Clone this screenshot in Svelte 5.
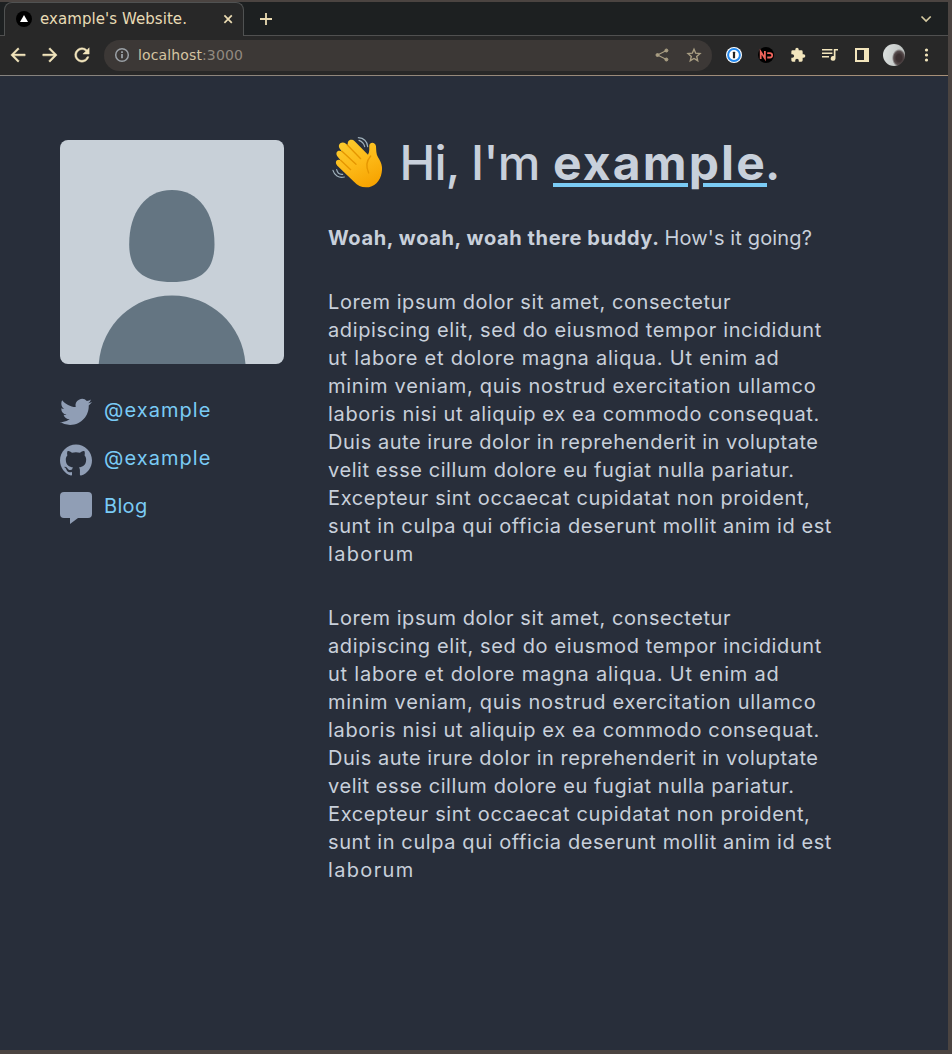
<script>
  const paragraph = [
    ['Lorem ipsum dolor sit amet, consectetur', 403],
    ['adipiscing elit, sed do eiusmod tempor incididunt', 494],
    ['ut labore et dolore magna aliqua. Ut enim ad', 451.5],
    ['minim veniam, quis nostrud exercitation ullamco', 488.5],
    ['laboris nisi ut aliquip ex ea commodo consequat.', 492],
    ['Duis aute irure dolor in reprehenderit in voluptate', 490.5],
    ['velit esse cillum dolore eu fugiat nulla pariatur.', 466.5],
    ['Excepteur sint occaecat cupidatat non proident,', 482.5],
    ['sunt in culpa qui officia deserunt mollit anim id est', 504],
    ['laborum', 86.5]
  ];
  const paragraphs = [paragraph, paragraph];

  // Spreads the letters of a run so that it fills the given measure.
  function fit(node, width) {
    const natural = node.getBoundingClientRect().width;
    node.style.letterSpacing = `${(width - natural) / node.textContent.length}px`;
  }
</script>

<div class="window">
  <div class="strip">
    <div class="tab">
      <svg class="favicon" width="16" height="16" viewBox="0 0 16 16"><circle cx="8" cy="8" r="8" fill="#000" /><path d="M8 3.9 12 11H4z" fill="#fff" /></svg>
      <span class="title"><span use:fit={147}>example's Website.</span></span>
      <svg class="close" width="16" height="16" viewBox="0 0 16 16" fill="none" stroke="#ebdbb2" stroke-width="1.7"><path d="m4.4 4.4 7.4 7.4m0-7.4-7.4 7.4" /></svg>
    </div>
    <svg class="plus" width="16" height="16" viewBox="0 0 16 16" stroke="#ebdbb2" stroke-width="1.8"><path d="M8 2v12M2 8h12" /></svg>
    <svg class="chevron" width="16" height="16" viewBox="0 0 16 16" fill="none" stroke="#d5c9a1" stroke-width="1.7"><path d="m3.5 5.500 4.600 4.500L12.700 5.500" /></svg>
  </div>

  <div class="toolbar">
    <div class="nav">
      <svg width="20" height="20" viewBox="0 0 24 24"><path d="M20 11H7.830l5.590-5.590L12 4l-8 8 8 8 1.410-1.410L7.830 13H20z" transform="matrix(1.080 0 0 1.080 -1 -1)" stroke="#f2e5bc" stroke-width=".5" /></svg>
      <svg width="20" height="20" viewBox="0 0 24 24"><path d="m12 4-1.410 1.410L16.170 11H4v2h12.170l-5.580 5.590L12 20l8-8z" transform="matrix(1.080 0 0 1.080 -1 -1)" stroke="#f2e5bc" stroke-width=".5" /></svg>
      <svg width="20" height="20" viewBox="0 0 24 24"><path d="M17.650 6.350A7.958 7.958 0 0 0 12 4a8 8 0 1 0 7.730 10h-2.080A5.990 5.990 0 0 1 12 18a6 6 0 1 1 0-12c1.660 0 3.140.69 4.220 1.780L13 11h7V4z" transform="matrix(1.080 0 0 1.080 -1 -1)" stroke="#f2e5bc" stroke-width=".5" /></svg>
    </div>
    <div class="address">
      <svg width="16" height="16" viewBox="0 0 16 16" fill="none" stroke="#9aa0a6"><circle cx="8" cy="8" r="6.300" stroke-width="1.500" /><path d="M8 7v4.300M8 4.300v1.600" stroke-width="1.800" /></svg>
      <span class="url"><span use:fit={105}>localhost<i>:3000</i></span></span>
      <svg class="share" width="16" height="16" viewBox="0 0 16 16" fill="#a99e83" stroke="#a99e83"><path d="M12.500 3.500 3.500 8l9 4.500" fill="none" stroke-width="1.200" /><circle cx="12.400" cy="3.500" r="1.500" /><circle cx="3.500" cy="8" r="1.500" /><circle cx="12.400" cy="12.500" r="1.500" /></svg>
      <svg class="star" width="16" height="16" viewBox="0 0 16 16" fill="none" stroke="#a99e83" stroke-width="1.400"><path d="m8 2.200 1.700 4 4.300.4-3.300 2.900 1 4.200L8 11.500l-3.700 2.200 1-4.200L2 6.600l4.300-.4z" /></svg>
    </div>
    <div class="extensions">
      <svg width="16" height="16" viewBox="0 0 16 16"><circle cx="8" cy="8" r="8" fill="#fff" /><circle cx="8" cy="8" r="5.900" fill="#fff" stroke="#2489ee" stroke-width="2" /><rect x="6.900" y="4.800" width="2.200" height="6.400" rx=".5" fill="#222" /></svg>
      <svg width="16" height="16" viewBox="0 0 16 16"><circle cx="8" cy="8" r="8" fill="#000" /><path d="M2.700 12V4.800l4.200 6.400V4M9.200 6.100H12a2.200 2.200 0 0 1 0 4.400H9.200" fill="none" stroke="#ee635b" stroke-width="1.800" /></svg>
      <svg width="16" height="16" viewBox="0 0 24 24"><path d="M20.500 11H19V7a2 2 0 0 0-2-2h-4V3.500a2.500 2.500 0 0 0-5 0V5H4a2 2 0 0 0-2 2v3.800h1.500a2.700 2.700 0 0 1 0 5.400H2V20a2 2 0 0 0 2 2h3.800v-1.500a2.700 2.700 0 0 1 5.400 0V22H17a2 2 0 0 0 2-2v-4h1.500a2.500 2.500 0 0 0 0-5z" /></svg>
      <svg width="16" height="16" viewBox="0 0 16 16"><path d="M0 2h10.400v1.500H0zm0 3.500h10.400V7H0zm0 3.500h7v1.500H0zM11.800 2H16v1.500h-2.500v7.900a2.400 2.400 0 1 1-1.700-2.300z" /></svg>
      <svg width="16" height="16" viewBox="0 0 16 16"><path d="M1 1h14v14H1zm2 2v10h7V3z" fill-rule="evenodd" /></svg>
    </div>
    <div class="avatar"></div>
    <svg class="kebab" width="16" height="16" viewBox="0 0 16 16"><circle cx="8.500" cy="3" r="1.600" /><circle cx="8.500" cy="8" r="1.600" /><circle cx="8.500" cy="13" r="1.600" /></svg>
  </div>

  <main>
    <aside>
      <svg class="portrait" width="224" height="224" viewBox="0 0 224 224">
        <rect width="224" height="224" fill="#c8d0d8" />
        <path d="M112 50c27 0 42.500 23 42.500 54 0 25-12 38-42.500 38s-42.800-13-42.800-38c0-31 15.800-54 42.800-54z" fill="#647582" />
        <path d="M38.700 224c3-40 35-68.500 73.300-68.500s70.500 28.500 73.500 68.500z" fill="#647582" />
      </svg>
      <ul>
        <li>
          <svg width="32" height="32" viewBox="0 0 24 24"><path d="M23.953 4.570a10 10 0 01-2.825.775 4.958 4.958 0 002.163-2.723c-.951.555-2.005.959-3.127 1.184a4.920 4.920 0 00-8.384 4.482C7.690 8.095 4.067 6.130 1.640 3.162a4.822 4.822 0 00-.666 2.475c0 1.710.87 3.213 2.188 4.096a4.904 4.904 0 01-2.228-.616v.06a4.923 4.923 0 003.946 4.827 4.996 4.996 0 01-2.212.085 4.936 4.936 0 004.604 3.417 9.867 9.867 0 01-6.102 2.105c-.39 0-.779-.023-1.170-.067a13.995 13.995 0 007.557 2.209c9.053 0 13.998-7.496 13.998-13.985 0-.21 0-.42-.015-.63A9.935 9.935 0 0024 4.590z" /></svg>
          <a href="#twitter"><span use:fit={107.5}>@example</span></a>
        </li>
        <li>
          <svg width="32" height="32" viewBox="0 0 24 24"><path d="M12 .297c-6.630 0-12 5.373-12 12 0 5.303 3.438 9.800 8.205 11.385.6.113.82-.258.82-.577 0-.285-.01-1.040-.015-2.040-3.338.724-4.042-1.610-4.042-1.610C4.422 18.070 3.633 17.700 3.633 17.700c-1.087-.744.084-.729.084-.729 1.205.084 1.838 1.236 1.838 1.236 1.070 1.835 2.809 1.305 3.495.998.108-.776.417-1.305.76-1.605-2.665-.3-5.466-1.332-5.466-5.930 0-1.310.465-2.380 1.235-3.220-.135-.303-.54-1.523.105-3.176 0 0 1.005-.322 3.300 1.230.96-.267 1.980-.399 3-.405 1.020.006 2.040.138 3 .405 2.280-1.552 3.285-1.230 3.285-1.230.645 1.653.24 2.873.12 3.176.765.84 1.230 1.910 1.230 3.220 0 4.610-2.805 5.625-5.475 5.920.42.36.81 1.096.81 2.220 0 1.606-.015 2.896-.015 3.286 0 .315.21.69.825.57C20.565 22.092 24 17.592 24 12.297c0-6.627-5.373-12-12-12" /></svg>
          <a href="#github"><span use:fit={107.5}>@example</span></a>
        </li>
        <li>
          <svg width="32" height="32" viewBox="0 0 32 32"><path d="M4 0h24a4 4 0 0 1 4 4v18a4 4 0 0 1-4 4H18l-8 6v-6H4a4 4 0 0 1-4-4V4a4 4 0 0 1 4-4z" /></svg>
          <a href="#blog"><span use:fit={43.5}>Blog</span></a>
        </li>
      </ul>
    </aside>

    <article>
      <h1>
        <svg class="wave" width="55" height="53" viewBox="24 33 165 159" fill="none" stroke-linecap="round" stroke-linejoin="round">
          <defs><linearGradient id="skin" x1=".2" y1="0" x2=".7" y2="1"><stop offset="0" stop-color="#fccb2d" /><stop offset=".5" stop-color="#fdba18" /><stop offset="1" stop-color="#f7a300" /></linearGradient></defs>
          <path d="M104 49 144 89C150 79 147 70 148 61C149 50 167 51 168 64C169 76 168 87 174 97C183 111 189 124 185 143C181 168 163 187 138 187C123 187 113 181 102 170L52 122C42 111 52 99 63 107L53 95C43 82 55 72 66 80L60 72C50 58 65 46 78 56L85 63C78 48 93 38 104 49Z" fill="url(#skin)" />
          <path d="M82 60 122 101M66 79 108 118M62 106 92 134M152 93C139 108 138 127 146 144" stroke="#e59600" stroke-width="4" />
          <path d="M115 38C130 39 141 48 143 65M117 46C126 49 132 56 134 65M39 136C43 151 56 160 73 156M50 134C52 143 59 149 68 148" stroke="#9eafb9" stroke-width="3.500" />
        </svg>
        <span class="hello"><span use:fit={140}>Hi, I'm</span></span>
        <span class="name"><span use:fit={214}>example</span></span><span class="stop">.</span>
      </h1>
      <p class="lead"><strong><span use:fit={331.5}>Woah, woah, woah there buddy.</span></strong><span use:fit={147.5}>How's it going?</span></p>
      {#each paragraphs as lines}
        <p>
          {#each lines as [text, width]}
            <span class="line"><span use:fit={width}>{text}</span></span>
          {/each}
        </p>
      {/each}
    </article>
  </main>
</div>

<style>
  :global(body) { background: #4b4441; }
  .window {
    box-sizing: border-box;
    width: 952px;
    height: 1054px;
    display: flex;
    flex-direction: column;
    border: solid #4b4441;
    border-width: 2px 4px 4px 0;
    background: #282e3a;
    overflow: hidden;
    white-space: nowrap;
  }
  svg { display: block; flex: none; }
  .strip {
    box-sizing: border-box;
    height: 34px;
    flex: none;
    display: flex;
    align-items: center;
    padding-left: 4px;
    background: #1d2021;
    box-shadow: inset 0 -1px #505050;
  }
  .tab {
    box-sizing: border-box;
    width: 240px;
    height: 34px;
    display: flex;
    align-items: center;
    padding: 0 7px 2px 11px;
    border: 1px solid #505252;
    border-bottom: 0;
    border-radius: 8px 8px 0 0;
    background: #282828;
  }
  .title { flex: 1; margin-left: 8px; color: #e8dcb5; font: 15px/20px "DejaVu Sans", sans-serif; }
  .plus { margin-left: 14px; }
  .chevron { margin: 0 14px 0 auto; }
  .toolbar {
    box-sizing: border-box;
    height: 40px;
    flex: none;
    display: flex;
    align-items: center;
    padding: 0 0 1px 8px;
    border-bottom: 1px solid;
    border-image: linear-gradient(90deg, #85827e, #a89078) 1;
    background: #282828;
    fill: #f2e5bc;
  }
  .nav { display: flex; gap: 12px; }
  .address {
    box-sizing: border-box;
    width: 608px;
    height: 31px;
    margin-left: 12px;
    padding: 0 10px;
    display: flex;
    align-items: center;
    border-radius: 16px;
    background: #3c3836;
  }
  .url { margin-left: 8px; color: #d5c4a1; font: 14px/20px "DejaVu Sans", sans-serif; }
  i { font-style: normal; color: #928a80; }
  .share { margin-left: auto; }
  .star { margin-left: 16px; }
  .extensions { display: flex; gap: 16px; margin-left: 14px; }
  .avatar {
    width: 22px;
    height: 22px;
    margin-left: 13px;
    border-radius: 50%;
    background:
      radial-gradient(ellipse 7px 9px at 16px 14px, #3b3031 0 40%, #574c4d 75%, transparent),
      linear-gradient(100deg, #dde1e0, #b9bebc);
  }
  .kebab { margin-left: 13px; }
  main { display: flex; gap: 44px; padding: 64px 60px; color: #c8d0db; font: 20px/28px Inter, sans-serif; }
  aside { width: 224px; flex: none; }
  .portrait { border-radius: 8px; }
  ul { margin: 32px 0 0; padding: 0; display: grid; gap: 16px; list-style: none; }
  li { display: flex; gap: 12px; fill: #909eb5; }
  a { color: #7acbf5; text-decoration: none; }
  article { width: 512px; }
  h1 { height: 48px; margin: 0 0 36px; display: flex; align-items: center; font-size: 48px; line-height: 48px; font-weight: 500; }
  h1 > span { margin-top: -2px; }
  .wave { margin: -3px 16.500px 0 0; }
  .hello { width: 153.500px; }
  .name { font-weight: 650; text-decoration: underline 4px #7acbf5; text-underline-offset: 3px; }
  .name + .stop { margin-left: -2px; font-weight: 600; }
  p { margin: 0 0 36px; }
  .lead { display: flex; gap: 5px; }
  .line { display: block; }
</style>
